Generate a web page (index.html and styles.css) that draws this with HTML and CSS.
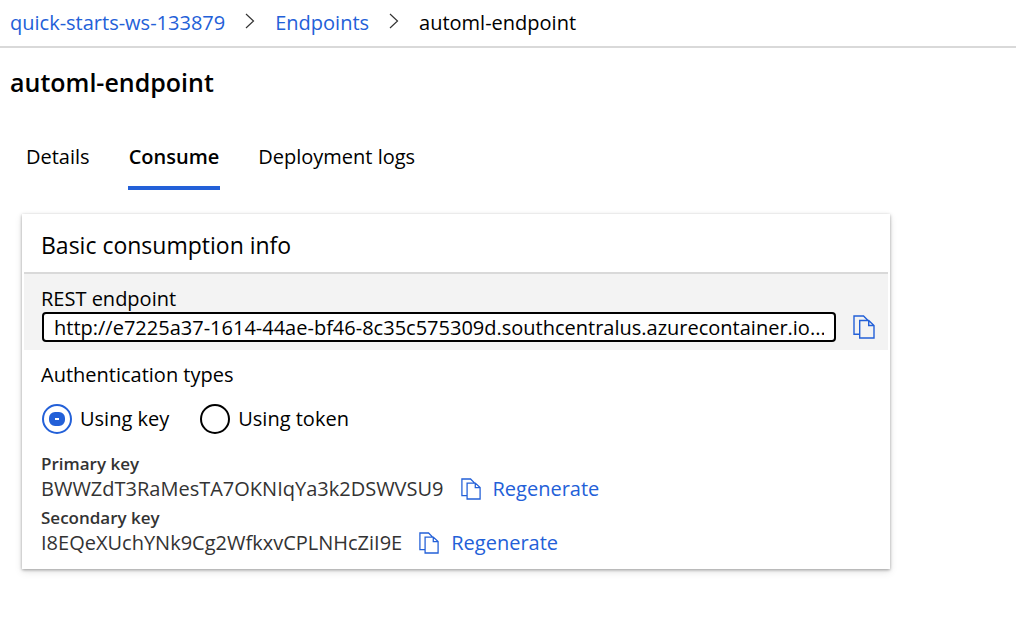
FILE: index.html
```html
<!DOCTYPE html>
<html lang="en">
<head>
<meta charset="utf-8">
<meta name="viewport" content="width=device-width, initial-scale=1">
<title>automl-endpoint</title>
<link rel="stylesheet" href="styles.css">
</head>
<body>
<svg class="sprite" aria-hidden="true">
  <symbol id="copy" viewBox="0 0 22 24">
    <path d="M6.500 19.300H1V1h9.500l4.300 4.300M6.700 5.500h9l5.300 5V23H6.700zM15.700 5.500v5H21" fill="none" stroke="currentColor" stroke-width="1.400"/>
  </symbol>
  <symbol id="chevron" viewBox="0 0 10 16">
    <path d="M1 1l7.500 7L1 15" fill="none" stroke="currentColor" stroke-width="1.200"/>
  </symbol>
</svg>
<nav class="breadcrumb" aria-label="Breadcrumb">
  <a class="link" href="#">quick-starts-ws-133879</a>
  <svg class="chevron"><use href="#chevron"/></svg>
  <a class="link" href="#">Endpoints</a>
  <svg class="chevron"><use href="#chevron"/></svg>
  <span>automl-endpoint</span>
</nav>
<main class="page">
  <h1 class="title">automl-endpoint</h1>
  <div class="tabs" role="tablist">
    <button class="tab" role="tab" type="button">Details</button>
    <button class="tab tab-active" role="tab" type="button" aria-selected="true">Consume</button>
    <button class="tab" role="tab" type="button">Deployment logs</button>
  </div>
  <section class="card">
    <h2 class="card-title">Basic consumption info</h2>
    <div class="endpoint">
      <label class="endpoint-label" for="rest">REST endpoint</label>
      <div class="endpoint-row">
        <input class="endpoint-input" id="rest" type="text" readonly value="http://e7225a37-1614-44ae-bf46-8c35c575309d.southcentralus.azurecontainer.io...">
        <button class="icon-button" type="button" aria-label="Copy endpoint"><svg class="copy-large"><use href="#copy"/></svg></button>
      </div>
    </div>
    <fieldset class="auth">
      <legend class="auth-title">Authentication types</legend>
      <div class="options">
        <label class="option"><input class="radio" type="radio" name="auth" checked>Using key</label>
        <label class="option"><input class="radio" type="radio" name="auth">Using token</label>
      </div>
    </fieldset>
    <div class="keys">
      <h3 class="key-name">Primary key</h3>
      <div class="key-row">
        <span class="key-value">BWWZdT3RaMesTA7OKNIqYa3k2DSWVSU9</span>
        <button class="icon-button" type="button" aria-label="Copy primary key"><svg class="copy"><use href="#copy"/></svg></button>
        <button class="regenerate" type="button">Regenerate</button>
      </div>
      <h3 class="key-name">Secondary key</h3>
      <div class="key-row">
        <span class="key-value">I8EQeXUchYNk9Cg2WfkxvCPLNHcZiI9E</span>
        <button class="icon-button" type="button" aria-label="Copy secondary key"><svg class="copy"><use href="#copy"/></svg></button>
        <button class="regenerate" type="button">Regenerate</button>
      </div>
    </div>
  </section>
</main>
</body>
</html>
```
FILE: styles.css
```css
* { box-sizing: border-box; }
body {
  margin: 0;
  background: #fff;
  color: #000;
  font: 20px/28px "Segoe UI", "Open Sans", "Noto Sans", sans-serif;
}
button, input {
  margin: 0;
  padding: 0;
  border: 0;
  background: none;
  color: inherit;
  font: inherit;
}
h1, h2, h3 { margin: 0; }
.sprite { position: absolute; width: 0; height: 0; }
.breadcrumb {
  display: flex;
  align-items: center;
  height: 48px;
  padding: 0 10px;
  border-bottom: 2px solid #d9d9d9;
}
.link { color: #2360d8; text-decoration: none; }
.chevron {
  width: 10px;
  height: 16px;
  margin: 0 20px 4px;
  color: #333;
}
.page { padding: 17px 10px 0; }
.title { font-size: 25px; line-height: 34px; font-weight: 600; }
.tabs { display: flex; gap: 37px; padding: 39px 15px 0; }
.tab {
  height: 52px;
  padding: 0 1px 10px;
  border-bottom: 4px solid transparent;
}
.tab-active { font-weight: 600; border-color: #2360d8; }
.card {
  max-width: 868px;
  margin: 24px 12px;
  padding: 0 2px 10px;
  box-shadow: 0 1px 3px rgba(0, 0, 0, .35), 0 3px 8px rgba(0, 0, 0, .1);
}
.card-title {
  padding: 15px 17px 11px;
  border-bottom: 2px solid #d9d9d9;
  font-size: 23px;
  line-height: 32px;
  font-weight: 400;
}
.endpoint { padding: 12px 13px 8px 17px; background: #f3f3f3; }
.endpoint-label { display: block; line-height: 26px; }
.endpoint-row { display: flex; align-items: center; gap: 17px; padding-left: 1px; }
.endpoint-input {
  flex: 1;
  min-width: 0;
  height: 30px;
  padding: 0 10px;
  border: 2px solid #000;
  border-radius: 4px;
  background: #fff;
}
.icon-button { display: flex; color: #2360d8; }
.copy-large { width: 22px; height: 24px; }
.copy { width: 20px; height: 22px; }
.auth { margin: 0; padding: 11px 17px 0; border: 0; }
.auth-title { float: left; width: 100%; padding: 0; }
.options { display: flex; gap: 31px; padding: 15px 1px 0; clear: both; }
.option { display: flex; align-items: center; gap: 8px; }
.radio {
  display: grid;
  place-items: center;
  width: 30px;
  height: 30px;
  appearance: none;
  border: 2px solid #000;
  border-radius: 50%;
}
.radio:checked { border-color: #2360d8; }
.radio:checked::before {
  content: "";
  box-sizing: border-box;
  width: 16px;
  height: 14px;
  border: 6px solid #2360d8;
  border-radius: 6px;
}
.keys { padding: 17px 17px 0; color: #333; }
.key-name { font-size: 17px; line-height: 26px; font-weight: 600; }
.key-row { display: flex; align-items: center; gap: 12px; height: 28px; padding-bottom: 4px; }
.key-value { padding-right: 5px; }
.regenerate { color: #2360d8; }
```
